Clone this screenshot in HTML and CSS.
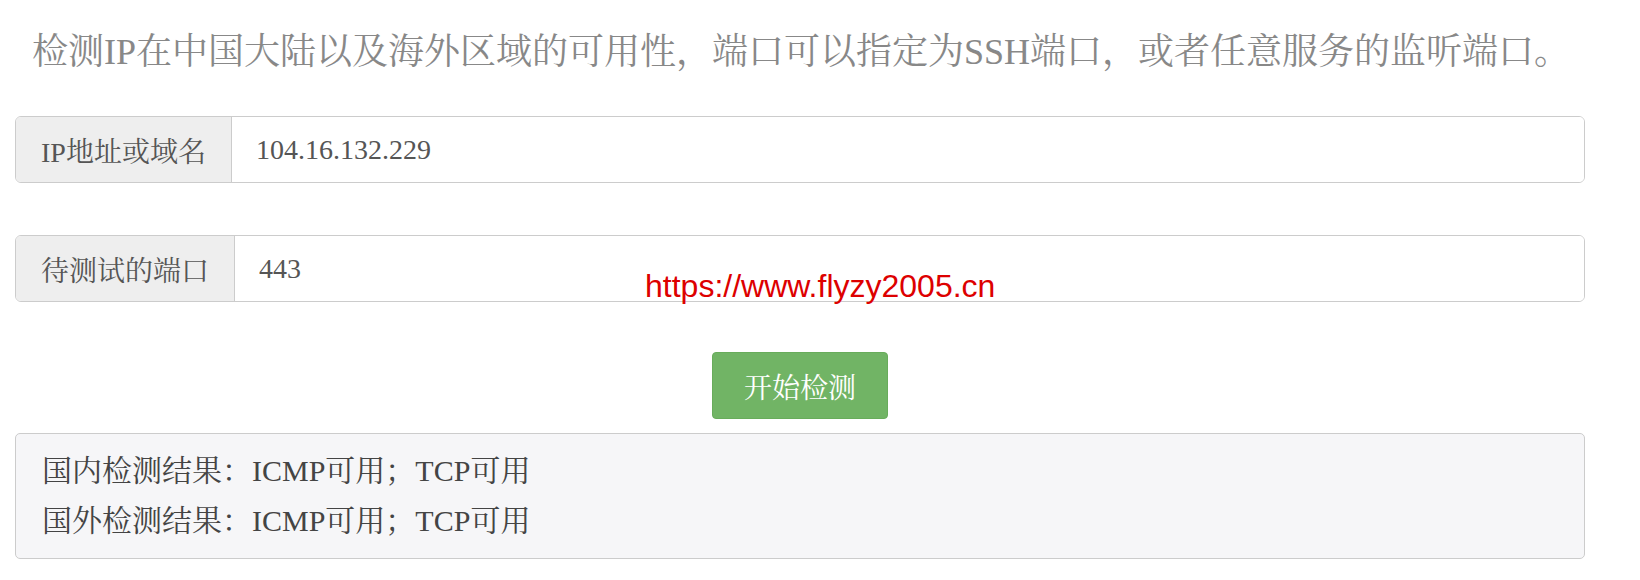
FILE: index.html
```html
<!DOCTYPE html>
<html lang="zh-CN">
<head>
<meta charset="utf-8">
<title>IP检测</title>
<link rel="stylesheet" href="styles.css">
</head>
<body>
<div class="page">
  <p class="intro">检测IP在中国大陆以及海外区域的可用性，端口可以指定为SSH端口，或者任意服务的监听端口。</p>
  <div class="group">
    <span class="addon">IP地址或域名</span>
    <input class="field" type="text" value="104.16.132.229">
  </div>
  <div class="group group-port">
    <span class="addon">待测试的端口</span>
    <input class="field" type="text" value="443">
  </div>
  <div class="actions">
    <button class="btn" type="button">开始检测</button>
  </div>
  <div class="result">
    <div class="result-line">国内检测结果：ICMP可用；TCP可用</div>
    <div class="result-line">国外检测结果：ICMP可用；TCP可用</div>
  </div>
</div>
<div class="watermark">https://www.flyzy2005.cn</div>
</body>
</html>
```
FILE: styles.css
```css
html, body {
  margin: 0;
  padding: 0;
  background: #ffffff;
}

body {
  font-family: "Liberation Serif", "Noto Serif CJK SC", "Noto Sans CJK SC", serif;
  color: #555555;
}

.page {
  width: 1570px;
  margin-left: 15px;
  padding-top: 32px;
}

.intro {
  margin: 0;
  padding-left: 17px;
  font-size: 36px;
  line-height: 40px;
  color: #888888;
  white-space: nowrap;
}

.group {
  display: flex;
  height: 67px;
  margin-top: 44px;
  border: 1px solid #cccccc;
  border-radius: 6px;
  box-sizing: border-box;
  overflow: hidden;
}

.group-port {
  margin-top: 52px;
}

.addon {
  display: flex;
  align-items: center;
  padding: 0 25px;
  background: #eeeeee;
  border-right: 1px solid #cccccc;
  font-size: 28px;
  color: #555555;
  white-space: nowrap;
}

.field {
  flex: 1;
  border: 0;
  outline: none;
  padding: 0 24px;
  margin: 0;
  font-family: "Liberation Serif", "Noto Serif CJK SC", "Noto Sans CJK SC", serif;
  font-size: 28px;
  color: #555555;
  background: #ffffff;
}

.actions {
  display: flex;
  justify-content: center;
  margin-top: 50px;
}

.btn {
  width: 176px;
  height: 67px;
  padding: 0;
  border: 1px solid #68ac5b;
  border-radius: 4px;
  background: #71b465;
  color: #ffffff;
  font-family: "Liberation Serif", "Noto Serif CJK SC", "Noto Sans CJK SC", serif;
  font-size: 28px;
}

.result {
  margin-top: 14px;
  padding: 12px 26px;
  background: #f6f6f8;
  border: 1px solid #cccccc;
  border-radius: 5px;
}

.result-line {
  font-size: 30px;
  line-height: 50px;
  color: #444444;
}

.watermark {
  position: absolute;
  left: 645px;
  top: 270px;
  font-family: "Liberation Sans", Arial, sans-serif;
  font-size: 32px;
  line-height: 32px;
  color: #dd0000;
  white-space: nowrap;
}
```
